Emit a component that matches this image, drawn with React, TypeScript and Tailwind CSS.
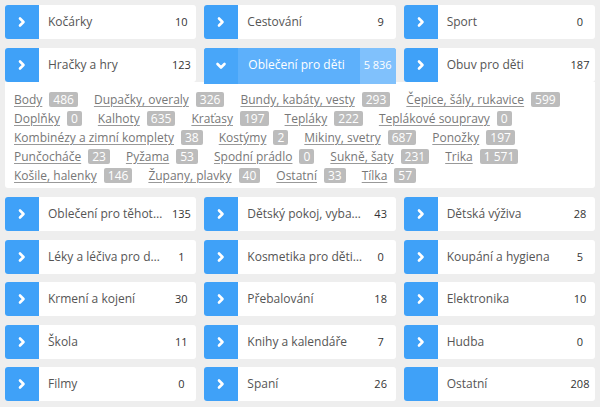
import React from "react";

type Cat = { name: string; count: string; expanded?: boolean; noIcon?: boolean };

const ROWS: Cat[][] = [
  [
    { name: "Kočárky", count: "10" },
    { name: "Cestování", count: "9" },
    { name: "Sport", count: "0" },
  ],
  [
    { name: "Hračky a hry", count: "123" },
    { name: "Oblečení pro děti", count: "5 836", expanded: true },
    { name: "Obuv pro děti", count: "187" },
  ],
  [
    { name: "Oblečení pro těhotné a kojící", count: "135" },
    { name: "Dětský pokoj, vybavení", count: "43" },
    { name: "Dětská výživa", count: "28" },
  ],
  [
    { name: "Léky a léčiva pro děti", count: "1" },
    { name: "Kosmetika pro děti a maminky", count: "0" },
    { name: "Koupání a hygiena", count: "5" },
  ],
  [
    { name: "Krmení a kojení", count: "30" },
    { name: "Přebalování", count: "18" },
    { name: "Elektronika", count: "10" },
  ],
  [
    { name: "Škola", count: "11" },
    { name: "Knihy a kalendáře", count: "7" },
    { name: "Hudba", count: "0" },
  ],
  [
    { name: "Filmy", count: "0" },
    { name: "Spaní", count: "26" },
    { name: "Ostatní", count: "208", noIcon: true },
  ],
];

const SUBCATS: [string, string][] = [
  ["Body", "486"],
  ["Dupačky, overaly", "326"],
  ["Bundy, kabáty, vesty", "293"],
  ["Čepice, šály, rukavice", "599"],
  ["Doplňky", "0"],
  ["Kalhoty", "635"],
  ["Kraťasy", "197"],
  ["Tepláky", "222"],
  ["Teplákové soupravy", "0"],
  ["Kombinézy a zimní komplety", "38"],
  ["Kostýmy", "2"],
  ["Mikiny, svetry", "687"],
  ["Ponožky", "197"],
  ["Punčocháče", "23"],
  ["Pyžama", "53"],
  ["Spodní prádlo", "0"],
  ["Sukně, šaty", "231"],
  ["Trika", "1 571"],
  ["Košile, halenky", "146"],
  ["Župany, plavky", "40"],
  ["Ostatní", "33"],
  ["Tílka", "57"],
];

const Chevron = ({ down }: { down?: boolean }) => (
  <svg width="12" height="12" viewBox="0 0 12 12" fill="none">
    <polyline
      points={down ? "2.5,4 6,7.5 9.5,4" : "4,2.5 7.5,6 4,9.5"}
      stroke="white"
      strokeWidth="2.6"
      strokeLinecap="round"
      strokeLinejoin="round"
    />
  </svg>
);

const CategoryCard = ({ cat }: { cat: Cat }) => {
  if (cat.expanded) {
    return (
      <div className="relative z-10 flex h-[36px] rounded-t-[3px] bg-[#5db0fb] text-white">
        <div className="flex w-[34px] shrink-0 items-center justify-center rounded-tl-[3px] bg-[#48a6f9]">
          <Chevron down />
        </div>
        <div className="min-w-0 flex-1 truncate pl-[10px] pr-1 text-[12px] leading-[34px]">
          {cat.name}
        </div>
        <div className="min-w-[30px] rounded-tr-[3px] bg-[#80c1fc] px-[4px] text-center text-[11px] leading-[34px]">
          {cat.count}
        </div>
      </div>
    );
  }
  return (
    <div className="flex h-[34px] rounded-[3px] bg-white">
      <div className="flex w-[34px] shrink-0 items-center justify-center rounded-l-[3px] bg-[#3fa1f8]">
        {!cat.noIcon && <Chevron />}
      </div>
      <div className="min-w-0 flex-1 truncate pl-[9px] pr-[2px] text-[12px] leading-[34px] text-[#555]">
        {cat.name}
      </div>
      <div className="min-w-[30px] pl-[3px] pr-[3px] text-center text-[11px] font-medium leading-[34px] text-[#333]">
        {cat.count}
      </div>
    </div>
  );
};

export default function App() {
  return (
    <div
      className="min-h-[407px] w-[600px] bg-[#eeeeee] p-[5px]"
      style={{ fontFamily: '"Open Sans", "Noto Sans", sans-serif' }}
    >
      <div className="flex flex-col gap-[9px]">
        {ROWS.map((row, i) => (
          <div key={i} className={i > 2 ? "-mt-[0.5px]" : ""}>
            <div className="grid grid-cols-3 items-start gap-x-[8px]">
              {row.map((cat) => (
                <CategoryCard key={cat.name} cat={cat} />
              ))}
            </div>
            {i === 1 && (
              <div className="relative -mt-[2px] rounded-b-[3px] bg-white px-[9px] pb-[3px] pt-[8px] text-[12px] leading-[19px] text-[#777]">
                {SUBCATS.map(([name, count]) => (
                  <span key={name} className="mr-[16px] inline-block whitespace-nowrap">
                    <a href="#" className="underline decoration-[#999] underline-offset-2">
                      {name}
                    </a>
                    <span className="ml-[7px] inline-block rounded-[2px] bg-[#bcbcbc] px-[4px] text-[12px] leading-[15px] text-white">
                      {count}
                    </span>
                  </span>
                ))}
              </div>
            )}
          </div>
        ))}
      </div>
    </div>
  );
}
